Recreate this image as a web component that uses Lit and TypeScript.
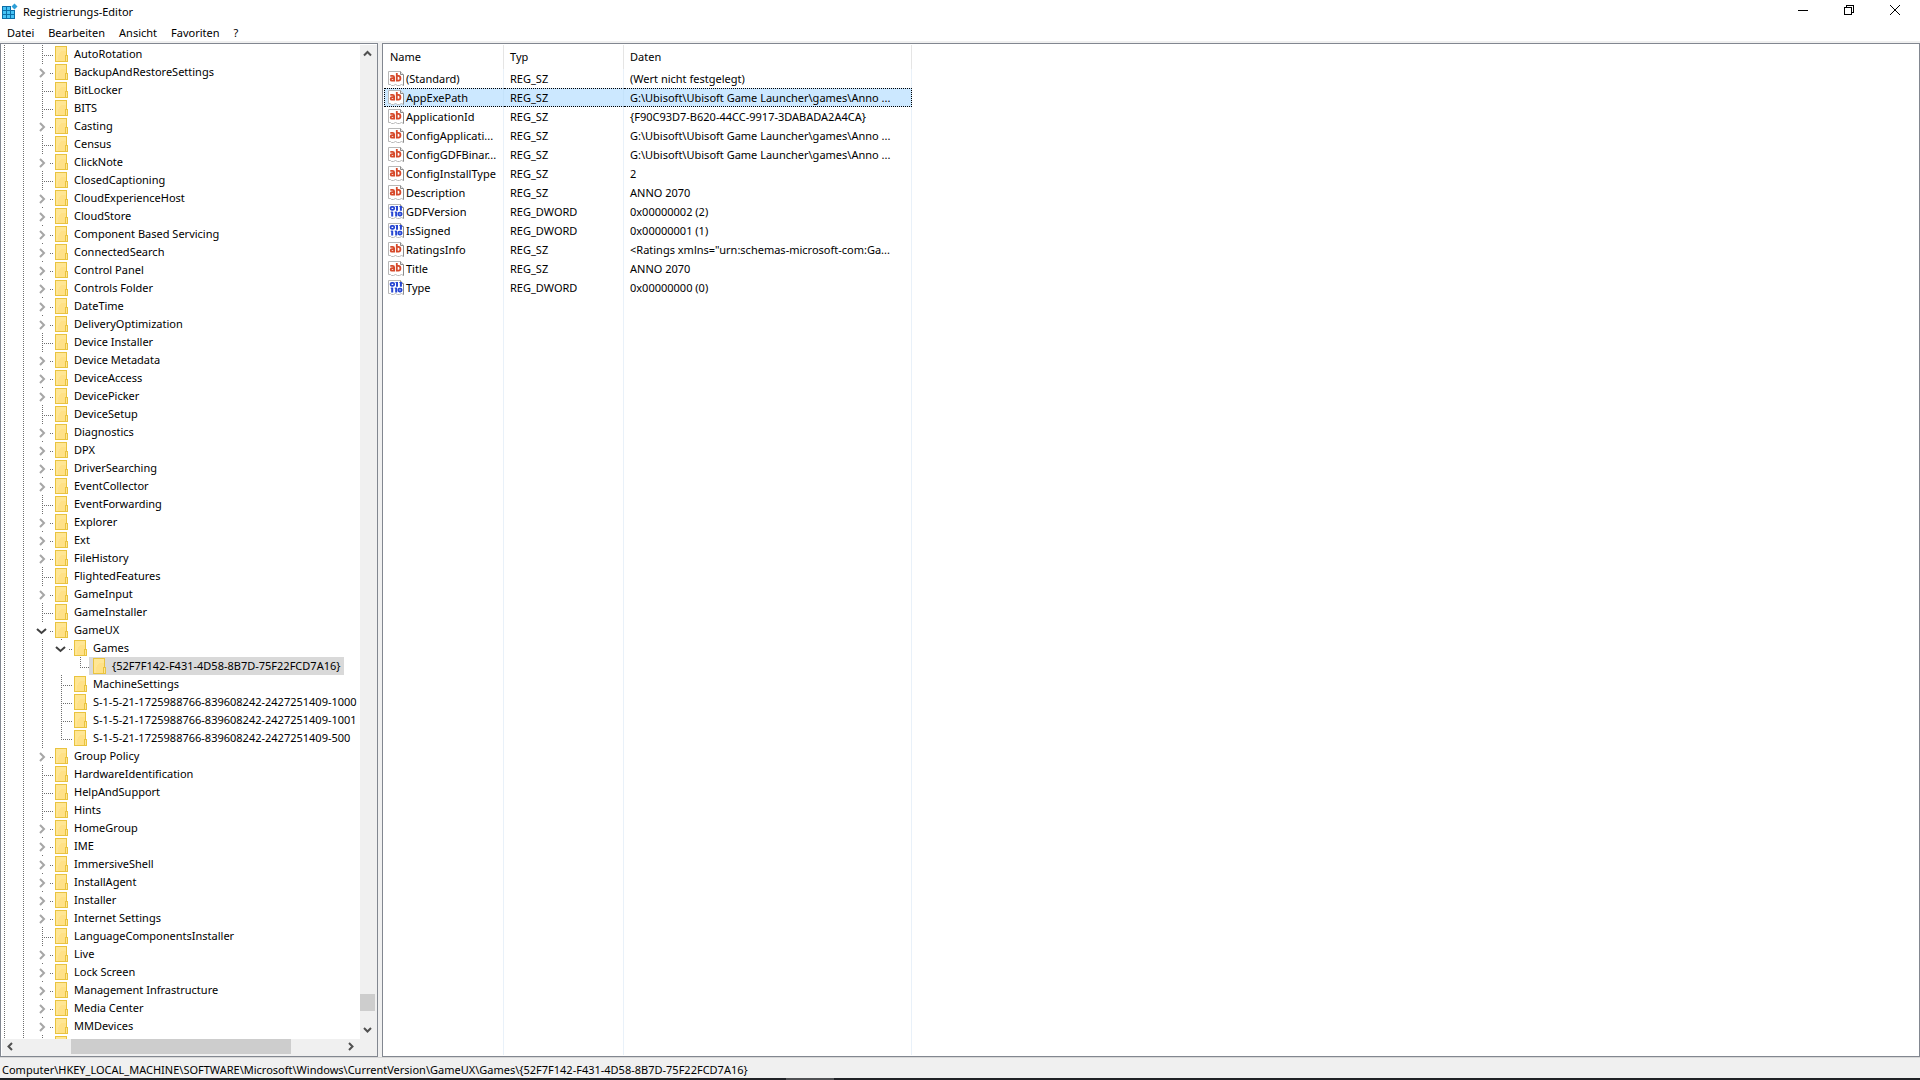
import { LitElement, html, css, svg, nothing } from "lit";
import { customElement } from "lit/decorators.js";

type State = "leaf" | "closed" | "open";
interface Key {
  name: string;
  level: number;
  state: State;
  last?: boolean;
  selected?: boolean;
}
interface Value {
  name: string;
  type: string;
  data: string;
  selected?: boolean;
}

/* "+" marks a collapsed key with children, "-" a key without any. */
const before =
  "-AutoRotation|+BackupAndRestoreSettings|-BitLocker|-BITS|+Casting|-Census|+ClickNote|-ClosedCaptioning|+CloudExperienceHost|+CloudStore|+Component Based Servicing|+ConnectedSearch|+Control Panel|+Controls Folder|+DateTime|+DeliveryOptimization|-Device Installer|+Device Metadata|+DeviceAccess|+DevicePicker|-DeviceSetup|+Diagnostics|+DPX|+DriverSearching|+EventCollector|-EventForwarding|+Explorer|+Ext|+FileHistory|-FlightedFeatures|+GameInput|-GameInstaller";
const after =
  "+Group Policy|-HardwareIdentification|-HelpAndSupport|-Hints|+HomeGroup|+IME|+ImmersiveShell|+InstallAgent|+Installer|+Internet Settings|-LanguageComponentsInstaller|+Live|+Lock Screen|+Management Infrastructure|+Media Center|+MMDevices|-";

const parse = (list: string): Key[] =>
  list.split("|").map((s) => ({
    name: s.slice(1),
    level: 0,
    state: s[0] === "+" ? "closed" : "leaf",
  }));

const keys: Key[] = [
  ...parse(before),
  { name: "GameUX", level: 0, state: "open" },
  { name: "Games", level: 1, state: "open" },
  { name: "{52F7F142-F431-4D58-8B7D-75F22FCD7A16}", level: 2, state: "leaf", last: true, selected: true },
  { name: "MachineSettings", level: 1, state: "leaf" },
  { name: "S-1-5-21-1725988766-839608242-2427251409-1000", level: 1, state: "leaf" },
  { name: "S-1-5-21-1725988766-839608242-2427251409-1001", level: 1, state: "leaf" },
  { name: "S-1-5-21-1725988766-839608242-2427251409-500", level: 1, state: "leaf", last: true },
  ...parse(after),
];

const values: Value[] = [
  { name: "(Standard)", type: "REG_SZ", data: "(Wert nicht festgelegt)" },
  { name: "AppExePath", type: "REG_SZ", data: "G:\\Ubisoft\\Ubisoft Game Launcher\\games\\Anno ...", selected: true },
  { name: "ApplicationId", type: "REG_SZ", data: "{F90C93D7-B620-44CC-9917-3DABADA2A4CA}" },
  { name: "ConfigApplicati...", type: "REG_SZ", data: "G:\\Ubisoft\\Ubisoft Game Launcher\\games\\Anno ..." },
  { name: "ConfigGDFBinar...", type: "REG_SZ", data: "G:\\Ubisoft\\Ubisoft Game Launcher\\games\\Anno ..." },
  { name: "ConfigInstallType", type: "REG_SZ", data: "2" },
  { name: "Description", type: "REG_SZ", data: "ANNO 2070" },
  { name: "GDFVersion", type: "REG_DWORD", data: "0x00000002 (2)" },
  { name: "IsSigned", type: "REG_DWORD", data: "0x00000001 (1)" },
  { name: "RatingsInfo", type: "REG_SZ", data: "<Ratings xmlns=\"urn:schemas-microsoft-com:Ga..." },
  { name: "Title", type: "REG_SZ", data: "ANNO 2070" },
  { name: "Type", type: "REG_DWORD", data: "0x00000000 (0)" },
];

const folder = html`<svg class="folder" width="14" height="16" viewBox="0 0 14 16" shape-rendering="crispEdges" aria-hidden="true">
  <rect x="0" y="0" width="12" height="16" fill="#e9c33f" />
  <rect x="10" y="9" width="3" height="7" fill="#e9c33f" />
  <path d="M1 1h10v8h-1v6h-9z" fill="#ffe694" />
  <path d="M6 5h5v4h-1v6h-7v-5z" fill="#ffe187" />
  <rect x="11" y="10" width="1" height="5" fill="#ffe694" />
</svg>`;

/* One dotted guide column; y ranges are given inside an 18px row. */
const dots = (x: number, from: number, to: number) =>
  svg`<line x1=${x + 0.5} x2=${x + 0.5} y1=${from} y2=${to} stroke="#6e6e6e" stroke-dasharray="1 1" />`;

const guides = (key: Key) => {
  const width = 53 + key.level * 19;
  const x = 40 + key.level * 19;
  const isLeaf = key.state === "leaf";
  return html`<svg class="guides" width=${width} height="18" viewBox="0 0 ${width} 18" shape-rendering="crispEdges" aria-hidden="true">
    ${dots(2, 0, 18)}${dots(21, 0, 18)}
    ${key.level > 0 ? dots(40, 0, 18) : nothing}
    ${key.level > 1 && !key.last ? dots(59, 0, 18) : nothing}
    ${isLeaf ? dots(x, 0, key.last ? 10 : 18) : dots(x, 0, 1)}
    <line x1=${isLeaf ? x : x + 8} x2=${x + 12} y1="10.5" y2="10.5" stroke="#6e6e6e" stroke-dasharray="1 1" />
    ${key.state === "closed"
      ? svg`<path d="M${x - 2} 6l4 4l-4 4" fill="none" stroke="#a6a6a6" stroke-width="2" shape-rendering="auto" />`
      : nothing}
    ${key.state === "open"
      ? svg`<path d="M${x - 5} 8l4.5 4l4.5 -4" fill="none" stroke="#404040" stroke-width="2" shape-rendering="auto" />`
      : nothing}
  </svg>`;
};

const valueIcon = (type: string) => html`<svg class="value-icon" width="16" height="16" viewBox="0 0 16 16" aria-hidden="true">
  <path d="M.5 .5h12l3 3v11l-2 -1l-2 1h-2l-2 -1l-2 1h-2l-1 -1l-2 0z" fill="#fff" stroke="#b8b8b8" />
  <path d="M12.500 .5v3h3" fill="#e4e4e4" stroke="#8c8c8c" />
  <path d="M15.500 4v10.500" stroke="#8c8c8c" />
  ${type === "REG_SZ"
    ? svg`<g fill="none" stroke="#d6492a" stroke-width="1.800">
        <path d="M2.300 4.900h2.200q1.600 0 1.600 1.400v4.200M6 7.100h-2q-1.300 0 -1.300 1.300q0 1.300 1.300 1.300h2.800" />
        <path d="M8.800 2v8.500M8.800 4.900h1.600q2 0 2 2.400q0 2.400 -2 2.400h-1.600" />
      </g>`
    : svg`<g fill="none" stroke="#2746d2" stroke-width="1.800">
        <rect x="2.600" y="2.900" width="3.600" height="2.900" rx="1.200" />
        <path d="M9 2v4.700M12.900 2v4.700M4.200 7.700v4.700M8.200 7.700v4.700" stroke-width="2" />
        <path d="M7.500 2.500h2M11.400 2.500h2M2.700 8.200h2M6.700 8.200h2" stroke-width="1" />
        <rect x="10.400" y="8.600" width="3.200" height="2.900" rx="1.200" />
      </g>`}
</svg>`;

const chevron = (d: string) => html`<svg width="17" height="17" viewBox="0 0 17 17" aria-hidden="true">
  <path d=${d} fill="none" stroke="#505050" stroke-width="2" />
</svg>`;

@customElement("app-root")
export class AppRoot extends LitElement {
  static styles = css`
    :host {
      display: flex;
      flex-direction: column;
      height: 100vh;
      overflow: hidden;
      background: #f0f0f0;
      color: #000;
      font: 11px/18px "Noto Sans", "Open Sans", sans-serif;
    }
    * {
      box-sizing: border-box;
    }
    button {
      margin: 0;
      padding: 0;
      border: 0;
      background: none;
      color: inherit;
      font: inherit;
    }
    svg {
      display: block;
      flex: none;
    }
    .titlebar {
      display: flex;
      align-items: flex-start;
      height: 24px;
      padding: 0 2px;
      background: #fff;
    }
    .logo {
      margin-top: 3px;
    }
    .title {
      flex: 1;
      margin: 0;
      padding: 3px 0 0 5px;
      font: inherit;
    }
    .window-button {
      width: 46px;
      height: 20px;
      display: grid;
      place-items: center;
    }
    .menubar {
      display: flex;
      gap: 14px;
      height: 17px;
      padding-left: 7px;
      background: #fff;
    }
    .menu {
      height: 17px;
      line-height: 17px;
    }
    .main {
      flex: 1;
      display: grid;
      grid-template-columns: 378px 1fr;
      gap: 4px;
      min-height: 0;
      padding-top: 2px;
    }
    .pane {
      border: 1px solid #828790;
      background: #fff;
      min-height: 0;
      min-width: 0;
      overflow: hidden;
    }
    .tree-pane {
      display: grid;
      grid-template-columns: 1fr 17px;
      grid-template-rows: 1fr 17px;
      padding: 1px 0 0 1px;
    }
    .tree {
      margin: 0;
      padding: 0;
      list-style: none;
      overflow: hidden;
      min-height: 0;
    }
    .key {
      display: flex;
      height: 18px;
      white-space: nowrap;
    }
    .key-button {
      display: flex;
      align-items: center;
      height: 18px;
      padding-right: 4px;
    }
    .key-button.selected {
      background: #d9d9d9;
      margin-left: -4px;
      padding-left: 4px;
    }
    .folder {
      margin-right: 5px;
    }
    .scroll {
      display: flex;
      background: #f0f0f0;
    }
    .scroll.vertical {
      flex-direction: column;
    }
    .corner {
      background: #f0f0f0;
    }
    .scroll-button {
      width: 17px;
      height: 17px;
    }
    .track {
      flex: 1;
      display: flex;
    }
    .vertical .track {
      flex-direction: column;
      justify-content: flex-end;
      padding: 0 2px 11px 0;
    }
    .horizontal .track {
      padding: 0 0 2px 52px;
    }
    .thumb {
      background: #cdcdcd;
    }
    .vertical .thumb {
      height: 17px;
    }
    .horizontal .thumb {
      width: 220px;
    }
    .list-pane {
      display: flex;
      padding: 1px;
    }
    .values {
      flex: none;
      height: 100%;
      border-collapse: separate;
      border-spacing: 0;
      table-layout: fixed;
      width: 528px;
    }
    .col-name {
      width: 120px;
    }
    .col-type {
      width: 120px;
    }
    th {
      height: 24px;
      padding: 0 0 0 6px;
      border-right: 1px solid #e5e5e5;
      font-weight: 400;
      text-align: left;
    }
    td {
      height: 19px;
      padding: 0 0 0 6px;
      border-right: 1px solid #e9f1f9;
      white-space: nowrap;
      overflow: hidden;
    }
    td:first-child {
      padding-left: 4px;
    }
    .filler td {
      height: auto;
    }
    .name-cell {
      display: flex;
      align-items: center;
      gap: 2px;
    }
    .value-icon {
      height: 16px;
    }
    .selected-row td {
      background: #cce8ff;
      border-top: 1px dotted #000;
      border-bottom: 1px dotted #000;
      border-right-color: #c4e2fa;
      line-height: 17px;
    }
    .selected-row td:first-child {
      border-left: 1px dotted #000;
      padding-left: 3px;
    }
    .selected-row td:last-child {
      border-right: 1px dotted #000;
    }
    .statusbar {
      height: 21px;
      padding: 3px 2px 0;
      border-top: 1px solid #d7d7d7;
      line-height: 17px;
      white-space: nowrap;
      overflow: hidden;
    }
    .taskbar {
      display: flex;
      height: 2px;
      padding-left: 786px;
      background: #202226;
    }
    .active-task {
      width: 48px;
      background: #505154;
    }
  `;

  render() {
    return html`
      <header class="titlebar">
        <svg class="logo" width="16" height="17" viewBox="0 0 16 17" aria-hidden="true">
          <path d="M0 3h9v4h4v9H0z" fill="#0b6ea8" />
          <path d="M1 4h3v3H1zM5 4h3v3H5zM1 8h3v3H1zM5 8h3v3H5zM9 8h3v3H9zM1 12h3v3H1zM5 12h3v3H5zM9 12h3v3H9z" fill="#46c3f5" />
          <path d="M12.500 .5l3 3l-3 3l-3 -3z" fill="#2f9fd8" />
        </svg>
        <h1 class="title">Registrierungs-Editor</h1>
        <button class="window-button" aria-label="Minimieren">
          <svg width="10" height="10" shape-rendering="crispEdges"><path d="M0 5.500h10" stroke="#000" /></svg>
        </button>
        <button class="window-button" aria-label="Verkleinern">
          <svg width="10" height="10" shape-rendering="crispEdges">
            <path d="M.5 2.500h7v7h-7zM2.500 2.500v-2h7v7h-2" fill="none" stroke="#000" />
          </svg>
        </button>
        <button class="window-button" aria-label="Schließen">
          <svg width="10" height="10"><path d="M0 0l10 10M10 0l-10 10" stroke="#000" /></svg>
        </button>
      </header>
      <nav class="menubar">
        ${["Datei", "Bearbeiten", "Ansicht", "Favoriten", "?"].map((m) => html`<button class="menu">${m}</button>`)}
      </nav>
      <main class="main">
        <section class="pane tree-pane">
          <ul class="tree">
            ${keys.map(
              (k) => html`<li class="key">
                ${guides(k)}<button class="key-button ${k.selected ? "selected" : ""}">${folder}${k.name}</button>
              </li>`
            )}
          </ul>
          <div class="scroll vertical">
            <button class="scroll-button" aria-label="Nach oben">${chevron("M4 10.500l3.500 -3.500l3.500 3.500")}</button>
            <div class="track"><div class="thumb"></div></div>
            <button class="scroll-button" aria-label="Nach unten">${chevron("M4 6l3.500 3.500l3.500 -3.500")}</button>
          </div>
          <div class="scroll horizontal">
            <button class="scroll-button" aria-label="Nach links">${chevron("M10 4l-3.500 3.500l3.500 3.500")}</button>
            <div class="track"><div class="thumb"></div></div>
            <button class="scroll-button" aria-label="Nach rechts">${chevron("M6 4l3.500 3.500l-3.500 3.500")}</button>
          </div>
          <div class="corner"></div>
        </section>
        <section class="pane list-pane">
          <table class="values">
            <colgroup>
              <col class="col-name" />
              <col class="col-type" />
              <col />
            </colgroup>
            <thead>
              <tr><th>Name</th><th>Typ</th><th>Daten</th></tr>
            </thead>
            <tbody>
              ${values.map(
                (v) => html`<tr class=${v.selected ? "selected-row" : ""}>
                  <td><div class="name-cell">${valueIcon(v.type)}<span>${v.name}</span></div></td>
                  <td>${v.type}</td>
                  <td>${v.data}</td>
                </tr>`
              )}
              <tr class="filler"><td></td><td></td><td></td></tr>
            </tbody>
          </table>
        </section>
      </main>
      <footer class="statusbar">
        Computer\\HKEY_LOCAL_MACHINE\\SOFTWARE\\Microsoft\\Windows\\CurrentVersion\\GameUX\\Games\\{52F7F142-F431-4D58-8B7D-75F22FCD7A16}
      </footer>
      <div class="taskbar"><div class="active-task"></div></div>
    `;
  }
}
